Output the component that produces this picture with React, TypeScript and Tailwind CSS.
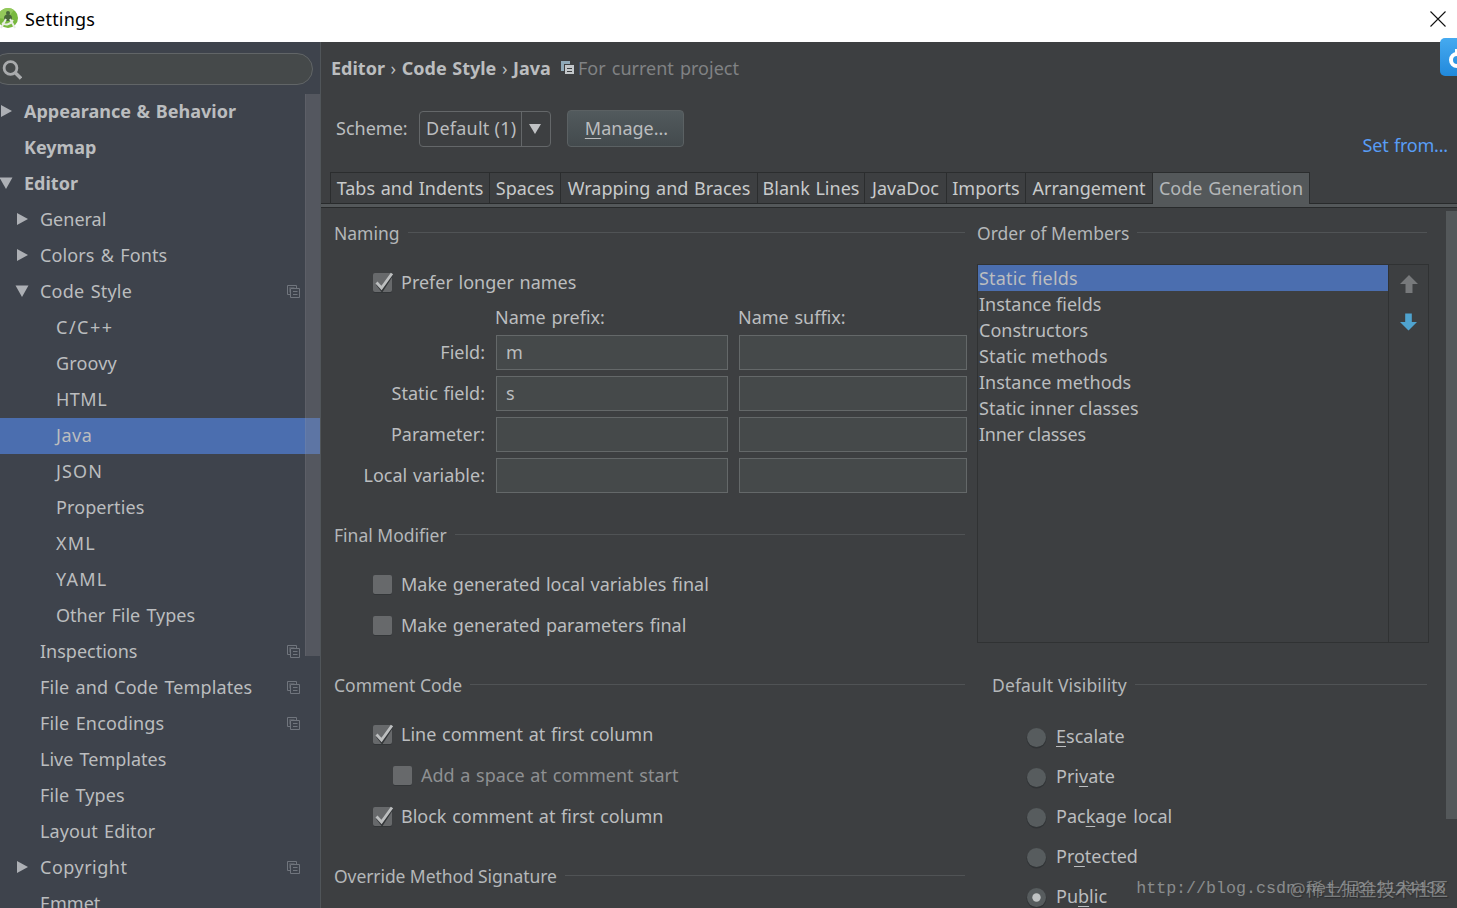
import clsx from "clsx";
import type { ReactNode } from "react";

type TreeItem = {
  label: string;
  level: 0 | 1 | 2;
  arrow?: "open" | "closed";
  shared?: boolean;
  selected?: boolean;
  tracking?: string;
};

const tree: TreeItem[] = [
  { label: "Appearance & Behavior", level: 0, arrow: "closed" },
  { label: "Keymap", level: 0 },
  { label: "Editor", level: 0, arrow: "open" },
  { label: "General", level: 1, arrow: "closed" },
  { label: "Colors & Fonts", level: 1, arrow: "closed", tracking: "tracking-[0.1px]" },
  { label: "Code Style", level: 1, arrow: "open", shared: true, tracking: "tracking-[0.2px]" },
  { label: "C/C++", level: 2, tracking: "tracking-[1.5px]" },
  { label: "Groovy", level: 2, tracking: "tracking-[0.15px]" },
  { label: "HTML", level: 2, tracking: "tracking-[0.5px]" },
  { label: "Java", level: 2, selected: true, tracking: "tracking-[0.5px]" },
  { label: "JSON", level: 2, tracking: "tracking-[1.1px]" },
  { label: "Properties", level: 2, tracking: "tracking-[0.1px]" },
  { label: "XML", level: 2, tracking: "tracking-[1.2px]" },
  { label: "YAML", level: 2, tracking: "tracking-[1.3px]" },
  { label: "Other File Types", level: 2 },
  { label: "Inspections", level: 1, shared: true },
  { label: "File and Code Templates", level: 1, shared: true, tracking: "tracking-[0.1px]" },
  { label: "File Encodings", level: 1, shared: true, tracking: "tracking-[0.15px]" },
  { label: "Live Templates", level: 1 },
  { label: "File Types", level: 1, tracking: "tracking-[0.1px]" },
  { label: "Layout Editor", level: 1, tracking: "tracking-[0.1px]" },
  { label: "Copyright", level: 1, arrow: "closed", shared: true, tracking: "tracking-[0.5px]" },
  { label: "Emmet", level: 1 },
];

const tabs = [
  { label: "Tabs and Indents", width: "w-[159px]" },
  { label: "Spaces", width: "w-[71px]" },
  { label: "Wrapping and Braces", width: "w-[197px]" },
  { label: "Blank Lines", width: "w-[107px]" },
  { label: "JavaDoc", width: "w-[82px]" },
  { label: "Imports", width: "w-[79px]" },
  { label: "Arrangement", width: "w-[127px]" },
  { label: "Code Generation", width: "w-[157px]", active: true },
];

const nameFields = [
  { label: "Field:", prefix: "m" },
  { label: "Static field:", prefix: "s" },
  { label: "Parameter:", prefix: "" },
  { label: "Local variable:", prefix: "" },
];

const members = [
  { label: "Static fields", tracking: "tracking-[0.2px]" },
  { label: "Instance fields" },
  { label: "Constructors" },
  { label: "Static methods", tracking: "tracking-[0.2px]" },
  { label: "Instance methods" },
  { label: "Static inner classes" },
  { label: "Inner classes", tracking: "tracking-[-0.25px]" },
];

// [before, mnemonic, after]
const visibilities = [
  ["", "E", "scalate"],
  ["Pri", "v", "ate"],
  ["Pac", "k", "age local"],
  ["Pr", "o", "tected"],
  ["Pu", "b", "lic"],
];

function SharedIcon({ bright }: { bright?: boolean }) {
  return (
    <svg width="13" height="13" viewBox="0 0 13 13" fill="none" className="shrink-0">
      {bright ? (
        <>
          <path d="M0 0h9v3H3v7H0z" fill="#8fa9b8" />
          <path d="M4 4h9v9H4z" fill="#c3c7ca" />
          <path d="M6 7.5h5M6 10.5h5" stroke="#3c3f41" />
        </>
      ) : (
        <>
          <path d="M3.5 9.5h-3v-9h9v3M3.5 3.5h9v9h-9zM6 6.5h4.5M6 9.5h4.5" stroke="#70757d" />
          <path d="M2.5 2.5h5M2.5 2.5v5" stroke="#565b63" />
        </>
      )}
    </svg>
  );
}

function Arrow({ open }: { open: boolean }) {
  return (
    <svg width="14" height="12" viewBox="0 0 14 12" className="shrink-0 fill-[#adb0b5]">
      {open ? <path d="M.5.5h13L7 12z" /> : <path d="M2 0v12L13 6z" />}
    </svg>
  );
}

function TreeRow({ item }: { item: TreeItem }) {
  return (
    <div
      className={clsx(
        "flex h-9 shrink-0 items-center pr-5 pb-0.5",
        item.level === 0 && "-ml-px font-bold",
        item.level === 1 && "pl-[15px]",
        item.level === 2 && "pl-[31px]",
        item.selected && "bg-[#4b6eaf]"
      )}
    >
      <span className="flex w-[25px] shrink-0">{item.arrow && <Arrow open={item.arrow === "open"} />}</span>
      <span
        className={clsx("flex-1", item.level === 0 ? "[word-spacing:1px]" : "[word-spacing:1.5px]", item.tracking)}
      >
        {item.label}
      </span>
      {item.shared && <SharedIcon />}
    </div>
  );
}

function Section({ title, className }: { title: string; className?: string }) {
  return (
    <div className={clsx("mr-0.5 flex h-9 items-center gap-2 text-[17.5px] text-[#b4b7b9]", className)}>
      <span>{title}</span>
      <span className="mb-px h-px flex-1 bg-[#505355]" />
    </div>
  );
}

function Check({ checked, disabled, children }: { checked?: boolean; disabled?: boolean; children: ReactNode }) {
  return (
    <div className={clsx("flex h-[41px] items-center", disabled ? "pl-[58px] text-[#8e9092]" : "pl-[38px]")}>
      <svg width="22" height="22" viewBox="0 0 22 22" className="mr-[7px] shrink-0">
        <rect x="1" y="2" width="19" height="19" rx="2" fill="#333638" />
        <rect x="1" y="1" width="19" height="19" rx="2" fill="#67696b" />
        {checked && (
          <>
            <path d="M5 12l5 6.5L20 3" fill="none" stroke="#333638" strokeWidth="2.5" />
            <path d="M4.5 10.5l5 5.5L20 1.5" fill="none" stroke="#bcbebf" strokeWidth="2.8" />
          </>
        )}
      </svg>
      <span className="mb-0.5 [word-spacing:1px]">{children}</span>
    </div>
  );
}

function Radio({ label, checked }: { label: string[]; checked?: boolean }) {
  return (
    <div className="flex h-10 items-center pl-[33px]">
      <svg width="22" height="22" viewBox="0 0 22 22" className="mt-[3px] mr-[9px] shrink-0">
        <circle cx="11.5" cy="11.5" r="10" fill="#313436" />
        <circle cx="11.5" cy="10.5" r="9.5" fill="#575c5e" />
        {checked && <circle cx="11.5" cy="10.5" r="4.2" fill="#c0c3c4" />}
      </svg>
      <span className="[word-spacing:2px]">
        {label[0]}
        <span className="underline decoration-1 underline-offset-[3px]">{label[1]}</span>
        {label[2]}
      </span>
    </div>
  );
}

function TitleBar() {
  return (
    <header className="flex h-[42px] shrink-0 items-center bg-white pb-1 text-black">
      <svg width="20" height="24" viewBox="0 0 20 24" className="shrink-0">
        <circle cx="8" cy="11" r="10" fill="#78b83e" />
        <path d="M-2 11a10 10 0 0 1 16-8l-7 9z" fill="#93c95b" />
        <path d="M4 11c0-5 8-5 8 0l-1 3H5z" fill="#48683a" />
        <circle cx="8" cy="6" r="2" fill="#48683a" />
        <path d="M2 16c4 2.5 8 2 11-3M6 12L1 21M10 12l5 9" fill="none" stroke="#e9ede5" strokeWidth="2" />
      </svg>
      <span className="ml-[5px] flex-1 tracking-[0.2px]">Settings</span>
      <svg width="16" height="16" viewBox="0 0 16 16" className="mr-[11px]">
        <path d="M.5.5l15 15M15.5.5l-15 15" stroke="#111" strokeWidth="1.1" />
      </svg>
    </header>
  );
}

function Sidebar() {
  return (
    <aside className="relative flex w-[321px] shrink-0 flex-col overflow-hidden border-r border-[#505559] bg-[#3e434c]">
      <div className="mt-[11px] -ml-2 flex h-8 w-[321px] shrink-0 items-center rounded-full border border-[#616567] bg-[#45494a] pt-px pl-[9px]">
        <svg width="20" height="20" viewBox="0 0 20 20" fill="none" stroke="#a9abad">
          <circle cx="8.5" cy="8" r="6.4" strokeWidth="2.8" />
          <path d="M13 12.5l6 6" strokeWidth="3.4" />
        </svg>
      </div>
      <nav className="mt-[9px] flex flex-col">
        {tree.map((item) => (
          <TreeRow key={item.label} item={item} />
        ))}
      </nav>
      {/* scrollbar thumb over the tree */}
      <div className="absolute top-[52px] right-0 h-[562px] w-[15px] border-l border-white/5 bg-[#87888a]/30" />
    </aside>
  );
}

function Header() {
  return (
    <>
      <div className="flex h-[53px] items-center pb-0.5 pl-[10px]">
        <span className="font-bold [word-spacing:0.9px]">
          Editor <span className="font-normal">›</span> Code Style <span className="font-normal">›</span> Java
        </span>
        <span className="ml-[10px] flex items-center gap-1 text-[#808284] [word-spacing:1.5px]">
          <SharedIcon bright />
          For current project
        </span>
      </div>
      <div className="flex pr-[9px] pl-[15px]">
        <div className="mt-[15px] flex h-[37px] items-center">
          <span className="mb-0.5 w-[83px]">Scheme:</span>
          <div className="flex h-9 w-[132px] rounded-[4px] border border-[#646769]">
            <span className="flex w-[102px] items-center border-r border-[#646769] pb-0.5 pl-[6px] tracking-[0.25px] whitespace-nowrap">
              Default (1)
            </span>
            <span className="flex flex-1 items-center justify-center pr-0.5">
              <svg width="12" height="10" viewBox="0 0 12 10" className="fill-[#c0c2c4]">
                <path d="M0 0h12L6 10z" />
              </svg>
            </span>
          </div>
          <button className="ml-4 h-[37px] w-[117px] rounded-[4px] border border-[#5b6163] bg-linear-to-b from-[#525a5d] to-[#434a4d] pb-0.5 pl-0.5">
            <span className="underline decoration-1 underline-offset-[3px]">M</span>anage...
          </button>
        </div>
        <a className="mt-[38px] ml-auto tracking-[-0.2px] text-[#589df6] [word-spacing:1px]">Set from...</a>
      </div>
    </>
  );
}

function Tabs() {
  return (
    <div className="mt-auto shrink-0">
      <div className="flex h-8 border-b border-[#282a2b] pl-[9px]">
        <div className="flex h-8 border-l border-[#2b2d2e]">
          {tabs.map((tab) => (
            <div
              key={tab.label}
              className={clsx(
                "flex items-center justify-center border-t border-r border-[#2b2d2e] whitespace-nowrap [word-spacing:1px]",
                tab.width,
                tab.active ? "bg-[#54585a] pb-0.5 text-[#b4b7b9]" : "h-[31px] pb-px text-[#c8cacb]"
              )}
            >
              {tab.label}
            </div>
          ))}
        </div>
      </div>
      <div className="h-1 border-b border-[#282a2b] bg-[#54585a]" />
    </div>
  );
}

function NamingGrid() {
  return (
    <div className="grid grid-cols-[151px_232px_228px] gap-x-[11px] gap-y-1.5">
      <div className="col-span-3 -mb-0.5 grid h-7 grid-cols-subgrid items-center [word-spacing:1px]">
        <span className="col-start-2 -ml-px">Name prefix:</span>
        <span className="-ml-px">Name suffix:</span>
      </div>
      {nameFields.map((f) => (
        <div key={f.label} className="col-span-3 grid h-[35px] grid-cols-subgrid">
          <span className="mb-0.5 self-center text-right [word-spacing:1px]">{f.label}</span>
          <div className="flex items-center border border-[#646869] bg-[#45494a] pb-0.5 pl-[9px]">{f.prefix}</div>
          <div className="border border-[#646869] bg-[#45494a]" />
        </div>
      ))}
    </div>
  );
}

function MemberList() {
  return (
    <div className="mt-[13px] flex h-[379px] border border-[#303233]">
      <div className="w-[411px] border-r border-[#303233]">
        {members.map((m, i) => (
          <div
            key={m.label}
            className={clsx("flex h-[26px] items-center pl-px", m.tracking, i === 0 && "bg-[#4b6eaf]")}
          >
            {m.label}
          </div>
        ))}
      </div>
      <div className="flex flex-1 flex-col items-center gap-5 pt-[10px]">
        <svg width="18" height="18" viewBox="0 0 18 18" fill="#77797b">
          <path d="M9 0l9 9h-5.5v9h-7V9H0z" />
        </svg>
        <svg width="17" height="18" viewBox="0 0 18 18" fill="#4fa3cf">
          <path d="M9 18L0 9h5.5V0h7v9H18z" />
        </svg>
      </div>
    </div>
  );
}

export default function App() {
  return (
    <div className="relative flex h-[908px] w-[1457px] flex-col overflow-hidden bg-[#3d3f41] font-['Noto_Sans','Noto_Sans_CJK_SC',sans-serif] text-[18px] leading-6 text-[#bbbdbf]">
      <TitleBar />
      <div className="flex min-h-0 flex-1">
        <Sidebar />
        <main className="flex min-w-0 flex-1 flex-col">
          <div className="flex h-[166px] shrink-0 flex-col">
            <Header />
            <Tabs />
          </div>
          <div className="flex min-h-0 flex-1 overflow-hidden pt-[7px] pl-[13px]">
            <div className="w-[633px] shrink-0">
              <Section title="Naming" className="mb-[11px]" />
              <Check checked>Prefer longer names</Check>
              <NamingGrid />
              <Section title="Final Modifier" className="mt-6 mb-[11px]" />
              <Check>Make generated local variables final</Check>
              <Check>Make generated parameters final</Check>
              <Section title="Comment Code" className="mt-[21px] mb-[11px]" />
              <Check checked>Line comment at first column</Check>
              <Check disabled>Add a space at comment start</Check>
              <Check checked>Block comment at first column</Check>
              <Section title="Override Method Signature" className="mt-[21px] tracking-[-0.08px]" />
            </div>
            <div className="ml-[10px] w-[452px] shrink-0">
              <Section title="Order of Members" />
              <MemberList />
              <div className="mt-6 pl-[15px]">
                <Section title="Default Visibility" className="mb-[13px] tracking-[0.15px]" />
                {visibilities.map((v, i) => (
                  <Radio key={v[2]} label={v} checked={i === 4} />
                ))}
              </div>
            </div>
            <div className="-mt-1 ml-auto h-[608px] w-[11px] bg-[#54585a]" />
          </div>
        </main>
      </div>

      {/* floating widget docked to the right edge */}
      <div className="absolute top-[38px] right-0 h-[38px] w-[17px] overflow-hidden rounded-l-[5px] bg-linear-to-b from-[#45aaf0] to-[#2189dc]">
        <svg width="17" height="38" viewBox="0 0 17 38" fill="none" stroke="#fff" strokeWidth="4">
          <circle cx="17" cy="22" r="6" />
          <path d="M17 11v6" />
        </svg>
      </div>

      {/* watermarks */}
      <span className="absolute right-[11px] bottom-[7px] font-['Liberation_Mono',monospace] text-[16.67px] text-[#8a8c8d]">
        http://blog.csdn.net/u012124438
      </span>
      <span className="absolute right-[9px] bottom-[7px] text-[17.8px] whitespace-nowrap text-[#9b9d9e]/70 [text-shadow:1px_1px_1px_#2228]">
        @稀土掘金技术社区
      </span>
    </div>
  );
}
